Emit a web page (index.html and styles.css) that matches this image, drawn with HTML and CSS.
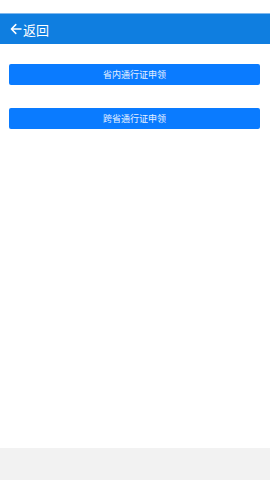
FILE: index.html
```html
<!DOCTYPE html>
<html lang="zh">
<head>
  <meta charset="UTF-8" />
  <meta name="viewport" content="width=device-width, initial-scale=1.0"/>
  <title>通行证申领</title>
  <link rel="stylesheet" href="styles.css">
</head>
<body>
  <div class="page">
    <div class="top-gap"></div>
    <header class="navbar">
      <a class="back" href="#">
        <svg class="back-icon" viewBox="0 0 12 12" width="12" height="12">
          <path d="M11 6H1.6M5.8 1.6L1.4 6l4.4 4.4" fill="none" stroke="#fff" stroke-width="1.5" stroke-linecap="round" stroke-linejoin="round"/>
        </svg>
        <span>返回</span>
      </a>
    </header>

    <main class="content">
      <button class="apply-btn">省内通行证申领</button>
      <button class="apply-btn">跨省通行证申领</button>
    </main>

    <footer class="bottom-bar"></footer>
  </div>
</body>
</html>
```

FILE: styles.css
```css
body {
  margin: 0;
  padding: 0;
  font-family: "Noto Sans CJK SC", "Noto Sans", sans-serif;
  background-color: #fff;
}

.page {
  display: flex;
  flex-direction: column;
  height: 480px;
}

.top-gap {
  height: 13px;
}

/* Barre du haut */
.navbar {
  height: 31px;
  background-color: #0f7ee0;
  border-top: 1px solid #7fb8ee;
  box-sizing: border-box;
  display: flex;
  align-items: center;
  padding-left: 10px;
}

.back {
  display: flex;
  align-items: center;
  color: #fff;
  text-decoration: none;
  font-size: 13px;
  line-height: 1;
}

.back-icon {
  margin-right: 1px;
}

.content {
  flex: 1;
  display: flex;
  flex-direction: column;
  gap: 23px;
  padding: 20px 10px 0 9px;
}

.apply-btn {
  height: 21px;
  border: none;
  border-radius: 2px;
  background-color: #0a7bff;
  color: #e8f1ff;
  font-family: "Noto Sans CJK SC", sans-serif;
  font-size: 9px;
  padding: 0;
  cursor: pointer;
}

.bottom-bar {
  height: 32px;
  background-color: #f2f2f2;
}
```
